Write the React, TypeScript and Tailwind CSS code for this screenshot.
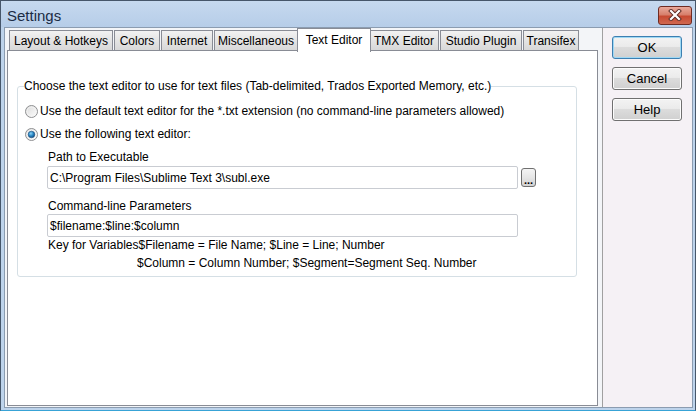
import React from "react";

const tabs = [
  { label: "Layout & Hotkeys", w: 104 },
  { label: "Colors", w: 46 },
  { label: "Internet", w: 52 },
  { label: "Miscellaneous", w: 84 },
  { label: "Text Editor", w: 70, active: true },
  { label: "TMX Editor", w: 70 },
  { label: "Studio Plugin", w: 82 },
  { label: "Transifex", w: 56 },
];

function Radio({ checked }: { checked?: boolean }) {
  return (
    <svg width="13" height="13" viewBox="0 0 13 13" className="shrink-0">
      <defs>
        <linearGradient id="rfill" x1="0" y1="0" x2="1" y2="1">
          <stop offset="0" stopColor="#d9d9d9" />
          <stop offset="1" stopColor="#ffffff" />
        </linearGradient>
        <radialGradient id="rdot" cx="0.4" cy="0.35" r="0.7">
          <stop offset="0" stopColor="#8fd2f5" />
          <stop offset="0.5" stopColor="#2a89c6" />
          <stop offset="1" stopColor="#11457a" />
        </radialGradient>
      </defs>
      <circle cx="6.5" cy="6.5" r="6" fill="url(#rfill)" stroke="#8f9092" />
      <circle cx="6.5" cy="6.5" r="4.5" fill="none" stroke="#f4f4f4" strokeWidth="0.8" />
      {checked && <circle cx="6.5" cy="6.5" r="3.3" fill="url(#rdot)" stroke="#1e5180" strokeWidth="0.6" />}
    </svg>
  );
}

function DlgButton({ label, primary }: { label: string; primary?: boolean }) {
  return (
    <div
      className={
        "w-[70px] h-[23px] rounded-[3px] border flex items-center justify-center text-[13px] text-black bg-[linear-gradient(to_bottom,#f3f3f3_0%,#ebebeb_45%,#dcdcdc_50%,#d0d0d0_100%)] " +
        (primary ? "border-[#3c7fb1] shadow-[inset_0_0_0_1px_#9fd8f4]" : "border-[#707070] shadow-[inset_0_0_0_1px_#fcfcfc]")
      }
    >
      {label}
    </div>
  );
}

export default function App() {
  return (
    <div className="w-[696px] h-[411px] flex flex-col bg-[#bdd3eb] border border-[#46566a] border-b-[#38a3d6] overflow-hidden font-['Liberation_Sans',Arial,sans-serif] text-[12px] leading-[14px] text-black">
      {/* title bar */}
      <div className="h-[26px] shrink-0 flex items-center justify-between pl-[6px] pr-[3px] bg-[linear-gradient(to_bottom,#c6d9ef,#b6cde8)]">
        <span className="text-[15px] leading-[18px] text-[#1b2c44] mt-[3px]">Settings</span>
        <div className="w-[34px] h-[19px] mt-[2px] rounded-[3px] border border-[#6f2b22] flex items-center justify-center bg-[linear-gradient(to_bottom,#e9a99b_0%,#d7806c_45%,#c74a32_55%,#d0684f_100%)]">
          <svg width="14" height="12" viewBox="0 0 14 12">
            <path d="M3 2 L11 10 M11 2 L3 10" stroke="#5a2a24" strokeWidth="4" strokeLinecap="square" />
            <path d="M3 2 L11 10 M11 2 L3 10" stroke="#ffffff" strokeWidth="2.2" strokeLinecap="square" />
          </svg>
        </div>
      </div>

      {/* client */}
      <div className="flex-1 flex ml-[3px] mr-[2px] mb-[2px] border border-[#8b9cb0] bg-[#f3f5f8]">
        <div className="w-[595px] shrink-0 pl-[2px] flex flex-col">
          <div className="h-[22px] flex items-end pl-[2px]">
            {tabs.map((t) =>
              t.active ? (
                <div
                  key={t.label}
                  style={{ width: t.w + 4 }}
                  className="relative z-10 -mx-[2px] -mb-[2px] h-[24px] bg-white border border-b-0 border-[#898c95] flex items-start justify-center pt-[4px] whitespace-nowrap"
                >
                  {t.label}
                </div>
              ) : (
                <div
                  key={t.label}
                  style={{ width: t.w }}
                  className="h-[20px] mr-[1px] border border-b-0 border-[#898c95] flex items-center justify-center whitespace-nowrap bg-[linear-gradient(to_bottom,#f2f2f2,#e4e4e4_50%,#d8d8d8)]"
                >
                  {t.label}
                </div>
              )
            )}
          </div>
          <div className="w-[591px] flex-1 mb-[1px] bg-white border border-[#898c95] pl-[9px] pt-[28px]">
            <fieldset className="w-[560px] h-[198px] border border-[#d5dfe5] rounded-[3px] flex flex-col">
              <legend className="ml-[6px] leading-[14px]">
                Choose the text editor to use for text files (Tab-delimited, Trados Exported Memory, etc.)
              </legend>
              <div className="h-[14px] mt-[11px] ml-[7px] flex items-center gap-[2px]">
                <Radio />
                <span>Use the default text editor for the *.txt extension (no command-line parameters allowed)</span>
              </div>
              <div className="h-[14px] mt-[9px] ml-[7px] flex items-center gap-[2px]">
                <Radio checked />
                <span>Use the following text editor:</span>
              </div>
              <div className="mt-[9px] ml-[30px]">Path to Executable</div>
              <div className="mt-[2px] ml-[29px] flex items-center gap-[3px]">
                <div className="w-[471px] h-[23px] border border-[#c9ccd2] rounded-[2px] flex items-center pl-[2px]">
                  C:\Program Files\Sublime Text 3\subl.exe
                </div>
                <div className="w-[15px] h-[19px] rounded-[3px] border border-[#707070] flex items-end justify-center bg-[linear-gradient(to_bottom,#f4f4f4,#e6e6e6_50%,#d2d2d2)]">
                  <span className="text-[11px] leading-[12px] font-bold">...</span>
                </div>
              </div>
              <div className="mt-[10px] ml-[30px]">Command-line Parameters</div>
              <div className="mt-[1px] ml-[29px] w-[471px] h-[23px] border border-[#c9ccd2] rounded-[2px] flex items-center pl-[2px]">
                $filename:$line:$column
              </div>
              <div className="mt-[1px] ml-[30px]">Key for Variables$Filename = File Name; $Line = Line; Number</div>
              <div className="mt-[4px] ml-[119px]">$Column = Column Number; $Segment=Segment Seq. Number</div>
            </fieldset>
          </div>
        </div>
        <div className="flex-1 border-l border-[#a0a0a0] ml-[2px] bg-[#f5f1f5] pl-[9px] pt-[8px] flex flex-col gap-[8px]">
          <DlgButton label="OK" primary />
          <DlgButton label="Cancel" />
          <DlgButton label="Help" />
        </div>
      </div>
    </div>
  );
}
